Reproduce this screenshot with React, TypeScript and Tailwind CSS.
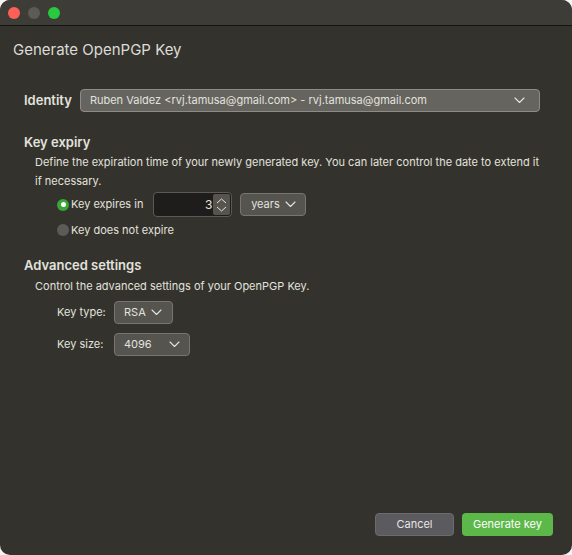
import React from "react";

function Chevron({ className = "" }: { className?: string }) {
  return (
    <svg width="11" height="7" viewBox="0 0 11 7" className={className} fill="none">
      <path d="M1 1l4.5 4.5L10 1" stroke="#e4e4e0" strokeWidth="1.1" strokeLinecap="round" strokeLinejoin="round" />
    </svg>
  );
}

export default function App() {
  return (
    <div className="w-[572px] h-[555px] bg-[#f4f4f4]" style={{ fontFamily: "Inter, 'Noto Sans', sans-serif" }}>
      <div className="w-[572px] h-[555px] rounded-[10px] overflow-hidden bg-[#34322c] flex flex-col text-[#e2e2de]">
        {/* title bar */}
        <div className="h-[26px] bg-[#3d3c37] border-b border-[#141412] flex items-center gap-[8px] pl-[8px] shrink-0">
          <div className="w-[12px] h-[12px] rounded-full bg-[#fe5f57]" />
          <div className="w-[12px] h-[12px] rounded-full bg-[#5c5b58]" />
          <div className="w-[12px] h-[12px] rounded-full bg-[#28c840]" />
        </div>
        <div className="flex-1 flex flex-col px-[13px]">
          <div className="mt-[14px] text-[15px] leading-[20px] text-[#dcdcd8]">Generate OpenPGP Key</div>

          <div className="pl-[11px] pr-[19px] mt-[29px]">
            {/* identity */}
            <div className="flex items-center gap-[8px]">
              <div className="text-[13px] font-semibold">Identity</div>
              <div className="flex-1 h-[23px] rounded-[4px] bg-[#65645e] border border-[#8d8c87] flex items-center justify-between pl-[9px] pr-[14px] text-[11px]">
                <span>Ruben Valdez &lt;rvj.tamusa@gmail.com&gt; - rvj.tamusa@gmail.com</span>
                <Chevron />
              </div>
            </div>

            {/* key expiry */}
            <div className="mt-[21px] text-[13px] font-semibold leading-[18px]">Key expiry</div>
            <div className="pl-[11px] mt-[2px] text-[11px] leading-[19px]">
              Define the expiration time of your newly generated key. You can later control the date to extend it if necessary.
            </div>
            <div className="pl-[33px] mt-[1px] flex flex-col gap-[5px] text-[11px]">
              <div className="flex items-center h-[25px]">
                <div className="w-[12px] h-[12px] rounded-full bg-[#3aa635] flex items-center justify-center mr-[2px]">
                  <div className="w-[5px] h-[5px] rounded-full bg-white" />
                </div>
                <span>Key expires in</span>
                <div className="ml-[10px] w-[79px] h-[25px] rounded-[4px] bg-[#1e1d1b] border border-[#5b5a55] flex items-center justify-end pr-[1px]">
                  <span className="text-[12px] mr-[1px]">3</span>
                  <div className="w-[17px] h-[21px] rounded-[2px] bg-[#55544f] flex flex-col items-center justify-center gap-[2px]">
                    <svg width="11" height="6" viewBox="0 0 11 6" fill="none"><path d="M1 5l4.5-4L10 5" stroke="#e4e4e0" strokeWidth="1" /></svg>
                    <svg width="11" height="6" viewBox="0 0 11 6" fill="none"><path d="M1 1l4.5 4L10 1" stroke="#e4e4e0" strokeWidth="1" /></svg>
                  </div>
                </div>
                <div className="ml-[8px] h-[23px] w-[66px] rounded-[4px] bg-[#55544f] border border-[#76756f] flex items-center justify-center gap-[5px]">
                  <span>years</span>
                  <Chevron />
                </div>
              </div>
              <div className="flex items-center">
                <div className="w-[12px] h-[12px] rounded-full bg-[#5c5b57] mr-[2px]" />
                <span>Key does not expire</span>
              </div>
            </div>

            {/* advanced */}
            <div className="mt-[17px] text-[13px] font-semibold leading-[18px]">Advanced settings</div>
            <div className="pl-[11px] mt-[3px] text-[11px] leading-[19px]">
              Control the advanced settings of your OpenPGP Key.
            </div>
            <div className="pl-[33px] mt-[5px] flex flex-col gap-[9px] text-[11px]">
              <div className="flex items-center">
                <span className="w-[57px]">Key type:</span>
                <div className="h-[23px] w-[59px] rounded-[4px] bg-[#55544f] border border-[#76756f] flex items-center pl-[9px] gap-[5px]">
                  <span>RSA</span>
                  <Chevron />
                </div>
              </div>
              <div className="flex items-center">
                <span className="w-[57px]">Key size:</span>
                <div className="h-[23px] w-[76px] rounded-[4px] bg-[#55544f] border border-[#76756f] flex items-center pl-[9px] gap-[17px]">
                  <span>4096</span>
                  <Chevron />
                </div>
              </div>
            </div>
          </div>

          <div className="flex-1" />
          <div className="flex justify-end gap-[8px] pr-[6px] mb-[19px]">
            <button className="w-[79px] h-[23px] rounded-[4px] bg-[#5a5a5f] border border-[#6a6a6f] text-[11px] text-[#e6e6e6]">Cancel</button>
            <button className="w-[91px] h-[23px] rounded-[4px] bg-[#5cb849] text-[11px] text-white">Generate key</button>
          </div>
        </div>
      </div>
    </div>
  );
}
